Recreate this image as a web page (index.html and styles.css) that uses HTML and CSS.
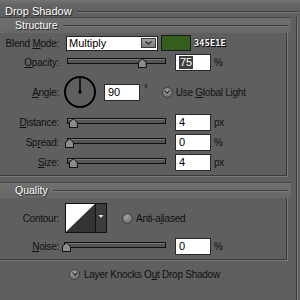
FILE: index.html
```html
<!DOCTYPE html>
<html lang="en">
<head>
    <meta charset="UTF-8">
    <title>Drop Shadow</title>
    <link rel="stylesheet" href="styles.css">
</head>
<body>
    <div class="title"><span>Drop Shadow</span></div>
    <div class="frame">
        <div class="band"><span>Structure</span></div>
        <div class="box structure">
            <div class="row r18">
                <label class="lbl">Blend <u>M</u>ode:</label>
                <div class="select">
                    <span>Multiply</span>
                    <i class="drop"><svg width="9" height="6" viewBox="0 0 9 6"><path d="M1.5 1.5 L4.5 4 L7.5 1.5" fill="none" stroke="#222" stroke-width="1.2"/></svg></i>
                </div>
                <div class="swatch"></div>
                <span class="hex">345E1E</span>
            </div>
            <div class="row r20">
                <label class="lbl"><u>O</u>pacity:</label>
                <div class="slider"><i class="thumb" style="left: 75%"></i></div>
                <div class="field"><span class="sel">75</span></div>
                <span class="unit">%</span>
            </div>
            <div class="row r40">
                <label class="lbl"><u>A</u>ngle:</label>
                <svg class="dial" width="32" height="34" viewBox="0 0 32 34">
                    <circle cx="16" cy="17" r="15" fill="none" stroke="#000" stroke-width="2"/>
                    <line x1="16" y1="17" x2="16" y2="2" stroke="#000" stroke-width="1.5"/>
                    <circle cx="16" cy="17" r="1.8" fill="#000"/>
                </svg>
                <div class="field angle">90</div>
                <span class="deg">°</span>
                <span class="check on"></span>
                <span class="ctext">Use <u>G</u>lobal Light</span>
            </div>
            <div class="row r20">
                <label class="lbl"><u>D</u>istance:</label>
                <div class="slider"><i class="thumb" style="left: 4%"></i></div>
                <div class="field">4</div>
                <span class="unit">px</span>
            </div>
            <div class="row r20">
                <label class="lbl">Sp<u>r</u>ead:</label>
                <div class="slider"><i class="thumb" style="left: 0%"></i></div>
                <div class="field">0</div>
                <span class="unit">%</span>
            </div>
            <div class="row r20">
                <label class="lbl"><u>S</u>ize:</label>
                <div class="slider"><i class="thumb" style="left: 4%"></i></div>
                <div class="field">4</div>
                <span class="unit">px</span>
            </div>
        </div>

        <div class="band quality"><span>Quality</span></div>
        <div class="box qbox">
            <div class="row r36">
                <label class="lbl">Contour:</label>
                <svg class="contour" width="42" height="30" viewBox="0 0 42 30">
                    <rect x="0.5" y="0.5" width="41" height="29" fill="#3c3c3c" stroke="#111"/>
                    <polygon points="1,1 30,1 1,29" fill="#fff"/>
                    <polygon points="30,1 30,29 1,29" fill="#333"/>
                    <line x1="30.5" y1="1" x2="30.5" y2="29" stroke="#111"/>
                    <polygon points="33.5,12 38.5,12 36,15" fill="#e0e0e0"/>
                </svg>
                <span class="check radio"></span>
                <span class="ctext">Anti-a<u>l</u>iased</span>
            </div>
            <div class="row r20">
                <label class="lbl"><u>N</u>oise:</label>
                <div class="slider wide"><i class="thumb" style="left: 0%"></i></div>
                <div class="field">0</div>
                <span class="unit">%</span>
            </div>
        </div>

        <div class="knock">
            <span class="check on"></span>
            <span class="ctext">Layer Knocks O<u>u</u>t Drop Shadow</span>
        </div>
    </div>
</body>
</html>
```

FILE: styles.css
```css
body {
    margin: 0;
    width: 300px;
    height: 300px;
    overflow: hidden;
    background-color: #5f5f5f;
    font-family: "Liberation Sans", Arial, sans-serif;
    font-size: 10px;
    letter-spacing: -0.25px;
    color: #111;
}
u {
    text-decoration-thickness: 1px;
    text-underline-offset: 1px;
}

/* headers */
.title {
    height: 17px;
    display: flex;
    align-items: flex-start;
    background: linear-gradient(#747474, #646464 30%, #5f5f5f);
}
.title span,
.band span {
    color: #fff;
    font-size: 11px;
    line-height: 12px;
    letter-spacing: 0;
    text-shadow: 1px 1px 1px #1e1e1e;
    padding: 5px 5px 0 5px;
}
.title::after,
.band::after {
    content: "";
    flex: 1;
    height: 0;
    margin-top: 11px;
    margin-right: 2px;
    border-top: 1px solid #3c3c3c;
    border-bottom: 1px solid #7a7a7a;
}
.frame {
    width: 297px;
    height: 283px;
    border-right: 1px solid #7c7c7c;
    box-shadow: inset -1px 0 #3a3a3a;
}
.band {
    width: 291px;
    height: 16px;
    box-sizing: border-box;
    display: flex;
    align-items: flex-start;
    background: linear-gradient(#6f6f6f, #686868);
    border-top: 1px solid #474747;
}
.band span {
    font-size: 10.5px;
    padding: 1px 5px 0 15px;
}
.band::after {
    margin-top: 7px;
    margin-right: 3px;
}
.quality {
    margin-top: 5px;
}

/* group boxes */
.box {
    width: 287px;
    border-right: 1px solid #7a7a7a;
    border-bottom: 1px solid #7a7a7a;
    box-shadow: inset -1px -1px #3a3a3a;
}
.structure {
    padding: 1px 0 4px;
}
.qbox {
    padding: 2px 0 4px;
}
.row {
    display: flex;
    align-items: center;
}
.r18 { height: 18px; }
.r20 { height: 20px; }
.r36 { height: 36px; }
.r40 { height: 40px; }
.lbl {
    width: 59px;
    margin-right: 7px;
    text-align: right;
    flex-shrink: 0;
}

/* controls */
.select {
    width: 92px;
    height: 15px;
    box-sizing: border-box;
    display: flex;
    align-items: center;
    justify-content: space-between;
    background: #fff;
    border: 1px solid #222;
    padding: 0 1px 0 2px;
    color: #000;
    font-size: 11px;
    letter-spacing: 0;
}
.drop {
    width: 15px;
    height: 10px;
    box-sizing: border-box;
    display: flex;
    align-items: center;
    justify-content: center;
    background: linear-gradient(#a0a0a0, #7c7c7c);
    border: 1px solid #3a3a3a;
}
.swatch {
    width: 30px;
    height: 16px;
    box-sizing: border-box;
    margin-left: 3px;
    background: #345e1e;
    border: 1px solid #1a1a1a;
}
.hex {
    margin-left: 3px;
    font-family: "DejaVu Sans Mono", monospace;
    font-weight: bold;
    font-size: 8.5px;
    letter-spacing: 0.2px;
    color: #fff;
    text-shadow: 1px 1px 0 #000, 0 0 2px #000;
}
.slider {
    position: relative;
    width: 99px;
    height: 6px;
    box-sizing: border-box;
    margin-left: 1px;
    margin-top: -2px;
    background: #555;
    border: 1px solid #111;
    box-shadow: inset 0 1px #7a7a7a;
}
.slider.wide {
    width: 102px;
    margin-left: -2px;
}
.thumb {
    position: absolute;
    top: -1px;
    width: 9px;
    height: 10px;
    margin-left: -3px;
    background: #111;
    clip-path: polygon(50% 0, 100% 45%, 100% 100%, 0 100%, 0 45%);
}
.thumb::after {
    content: "";
    position: absolute;
    inset: 1px;
    background: #8c8c8c;
    clip-path: polygon(50% 0, 100% 45%, 100% 100%, 0 100%, 0 45%);
}
.field {
    width: 36px;
    height: 17px;
    box-sizing: border-box;
    margin-left: 9px;
    padding: 1px 3px;
    display: flex;
    align-items: center;
    background: #fff;
    border: 1px solid #2a2a2a;
    color: #000;
    font-size: 11px;
    letter-spacing: 0;
}
.field.angle {
    margin-left: 8px;
}
.sel {
    background: #3f3f3f;
    color: #fff;
    padding: 0 1px;
    line-height: 13px;
}
.unit {
    margin-left: 3px;
}
.deg {
    margin-left: 4px;
    align-self: flex-start;
    margin-top: 11px;
}
.dial {
    margin-left: -2px;
}
.check {
    width: 11px;
    height: 11px;
    box-sizing: border-box;
    border-radius: 50%;
    margin-left: 14px;
    border: 1px solid #3e3e3e;
    background: radial-gradient(circle at 40% 35%, #a4a4a4, #6a6a6a 80%);
    position: relative;
}
.check.on::after {
    content: "";
    position: absolute;
    left: 2.5px;
    top: 1.5px;
    width: 3px;
    height: 3px;
    border-right: 1.3px solid #222;
    border-bottom: 1.3px solid #222;
    transform: rotate(45deg);
}
.radio {
    margin-left: 15px;
}
.ctext {
    margin-left: 3px;
}
.contour {
    margin-left: -1px;
}
.knock {
    display: flex;
    align-items: center;
    height: 14px;
    margin-top: 6px;
    padding-left: 55px;
}
.knock .ctext {
    margin-left: 4px;
}
```
